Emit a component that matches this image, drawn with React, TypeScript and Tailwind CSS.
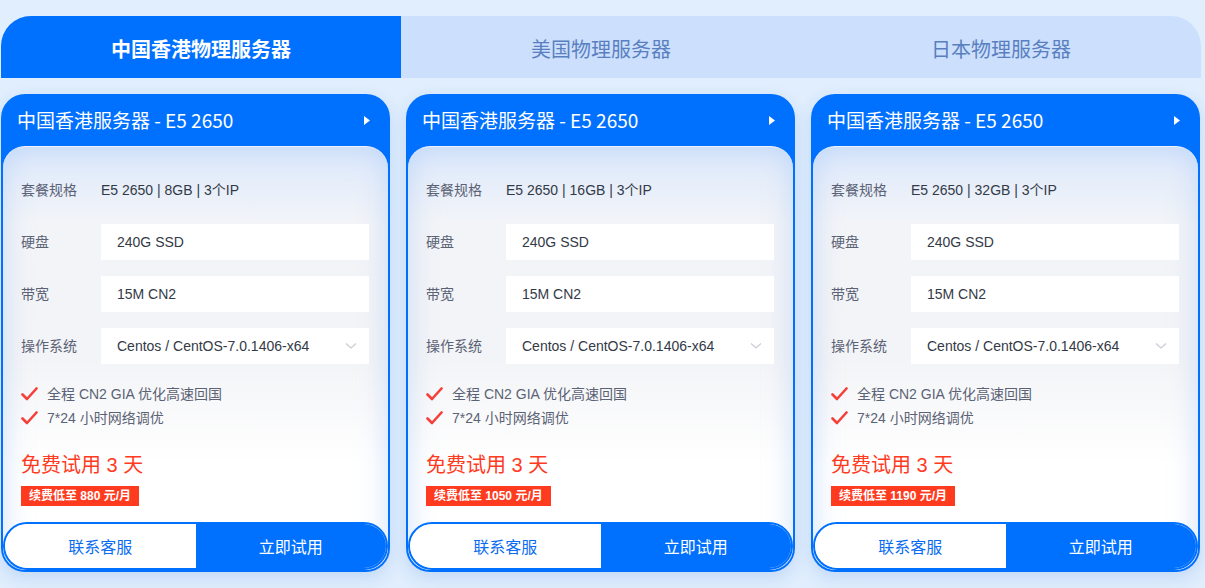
import React from "react";

const font = { fontFamily: '"Liberation Sans", "Noto Sans CJK SC", sans-serif' };

type Plan = { ram: string; price: string };

const plans: Plan[] = [
  { ram: "8GB", price: "880" },
  { ram: "16GB", price: "1050" },
  { ram: "32GB", price: "1190" },
];

const tabs = ["中国香港物理服务器", "美国物理服务器", "日本物理服务器"];

function Check() {
  return (
    <svg width="17" height="14" viewBox="0 0 17 14" className="shrink-0">
      <path d="M1.5 7.5 L6 12 L15.5 1.5" fill="none" stroke="#f5403a" strokeWidth="2.6" strokeLinecap="round" strokeLinejoin="round" />
    </svg>
  );
}

function Row({ label, value, boxed, select }: { label: string; value: string; boxed?: boolean; select?: boolean }) {
  return (
    <div className="flex h-9 items-center">
      <span className="w-20 shrink-0 text-[14px] text-[#5b6275]">{label}</span>
      {boxed ? (
        <div className="flex h-9 w-[268px] items-center justify-between bg-white pl-4 pr-3 text-[14px] text-[#333a47]">
          <span>{value}</span>
          {select ? (
            <svg width="12" height="8" viewBox="0 0 12 8">
              <path d="M1 1.5 L6 6 L11 1.5" fill="none" stroke="#c9ccd3" strokeWidth="1.2" />
            </svg>
          ) : null}
        </div>
      ) : (
        <span className="text-[14px] text-[#333a47]">{value}</span>
      )}
    </div>
  );
}

function Card({ plan }: { plan: Plan }) {
  return (
    <div className="flex h-[478px] w-[389px] flex-col overflow-hidden rounded-[24px] bg-[#0070ff] shadow-[0_6px_16px_rgba(60,120,220,0.18)]">
      <div className="flex h-[52px] shrink-0 items-center justify-between pl-4 pr-5 text-white">
        <span className="text-[19px]" style={{ fontFamily: '"Noto Sans CJK SC", sans-serif' }}>
          中国香港服务器 - E5 2650
        </span>
        <svg width="6" height="9" viewBox="0 0 6 9">
          <path d="M0 0 L6 4.5 L0 9 Z" fill="white" />
        </svg>
      </div>
      <div className="mx-[2px] mb-[2px] flex flex-1 flex-col overflow-hidden rounded-[22px] border-t border-[#eef4ff] bg-[linear-gradient(to_bottom,#dde9fc_0%,#f2f4f8_18%,#f3f4f7_50%,#ffffff_75%)] shadow-[inset_0_0_28px_rgba(160,195,245,0.5)]">
        <div className="flex flex-col gap-4 px-[18px] pt-[25px]">
          <Row label="套餐规格" value={`E5 2650 | ${plan.ram} | 3个IP`} />
          <Row label="硬盘" value="240G SSD" boxed />
          <Row label="带宽" value="15M CN2" boxed />
          <Row label="操作系统" value="Centos / CentOS-7.0.1406-x64" boxed select />
        </div>
        <div className="mt-[18px] flex flex-col px-[18px] text-[14px] text-[#5b6275]">
          <div className="flex h-6 items-center gap-[9px]">
            <Check />
            <span>全程 CN2 GIA 优化高速回国</span>
          </div>
          <div className="flex h-6 items-center gap-[9px]">
            <Check />
            <span>7*24 小时网络调优</span>
          </div>
        </div>
        <div className="mt-[23px] px-[18px] text-[20px] leading-6 text-[#ff3b1f]">免费试用 3 天</div>
        <div className="mt-[6px] px-[18px]">
          <span className="inline-flex h-5 items-center bg-[#ff3b1f] px-2 text-[12px] font-bold text-white">
            续费低至 {plan.price} 元/月
          </span>
        </div>
        <div className="mt-auto flex h-[48px] overflow-hidden rounded-[24px] border-2 border-[#0070ff] text-[16px]">
          <div className="flex flex-1 items-center justify-center rounded-l-[22px] bg-white pt-1 text-[#0a6cf0]">联系客服</div>
          <div className="flex flex-1 items-center justify-center bg-[#0070ff] pt-1 text-white">立即试用</div>
        </div>
      </div>
    </div>
  );
}

export default function App() {
  return (
    <div className="h-[588px] w-[1205px] overflow-hidden bg-[#e0eefd] pl-px pt-4" style={font}>
      <div className="flex h-[62px] w-[1200px] overflow-hidden rounded-t-[30px]">
        {tabs.map((t, i) => (
          <div
            key={t}
            className={
              i === 0
                ? "flex w-[400px] items-center justify-center bg-[#0070ff] pt-1.5 text-[20px] font-bold text-white"
                : "flex w-[400px] items-center justify-center bg-[#cce0fe] pt-1.5 text-[20px] text-[#5a7fbf]"
            }
          >
            {t}
          </div>
        ))}
      </div>
      <div className="mt-4 flex gap-4">
        {plans.map((p) => (
          <Card key={p.ram} plan={p} />
        ))}
      </div>
    </div>
  );
}
